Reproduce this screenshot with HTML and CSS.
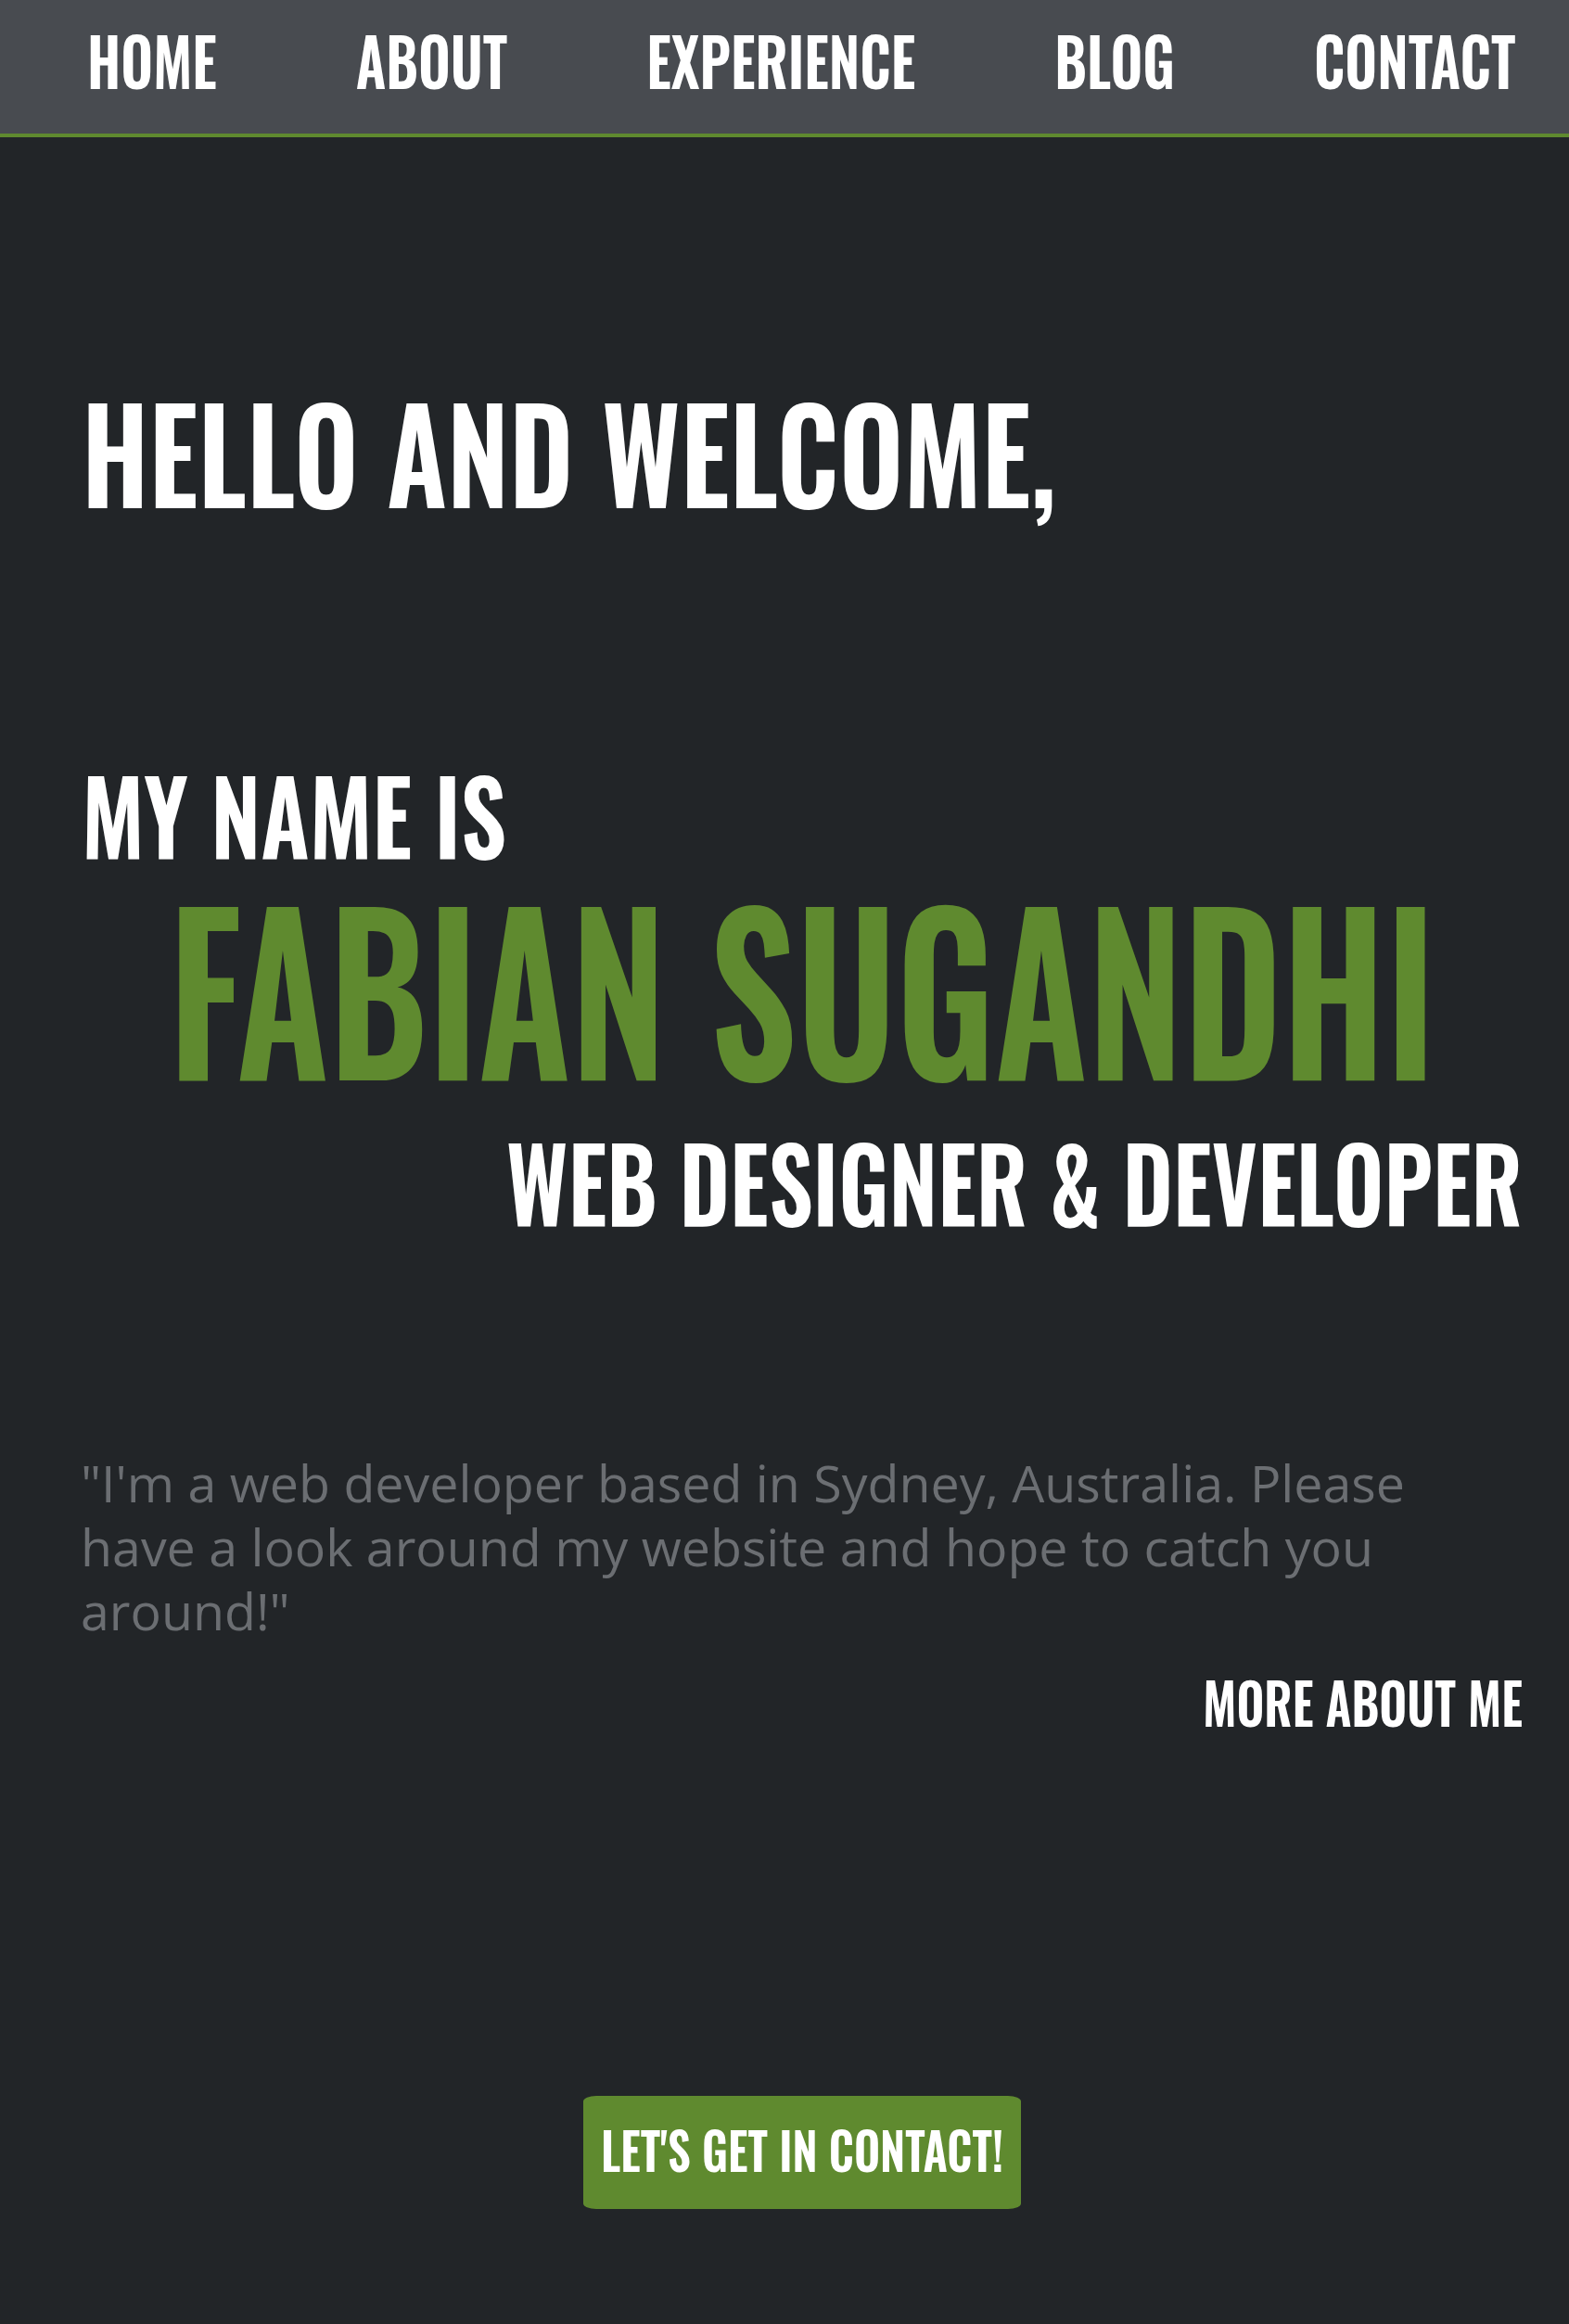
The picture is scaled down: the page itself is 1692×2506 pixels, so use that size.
FILE: index.html
```html
<!DOCTYPE html>
<html lang="en">
<head>
<meta charset="utf-8">
<title>Fabian Sugandhi</title>
<link rel="stylesheet" href="styles.css">
</head>
<body>
<nav class="nav">
  <a class="nav-link" href="#">HOME</a>
  <a class="nav-link" href="#">ABOUT</a>
  <a class="nav-link" href="#">EXPERIENCE</a>
  <a class="nav-link" href="#">BLOG</a>
  <a class="nav-link" href="#">CONTACT</a>
</nav>
<main class="hero">
  <h1 class="hello tall">HELLO AND WELCOME,</h1>
  <h2 class="name-intro tall">MY NAME IS</h2>
  <h2 class="name tall">FABIAN SUGANDHI</h2>
  <h3 class="role tall">WEB DESIGNER &amp; DEVELOPER</h3>
  <p class="intro">"I'm a web developer based in Sydney, Australia. Please have a look around my website and hope to catch you around!"</p>
  <div class="more-row"><a class="more tall" href="#">MORE ABOUT ME</a></div>
  <a class="cta" href="#"><span class="cta-text tall">LET'S GET IN CONTACT!</span></a>
</main>
</body>
</html>
```
FILE: styles.css
```css
* { box-sizing: border-box; }
html, body { margin: 0; }
body {
  background: #222528;
  color: #ffffff;
  font-family: "Oswald", "Liberation Sans Narrow", "Liberation Sans", sans-serif;
  min-height: 2506px;
}
.tall {
  transform: scaleY(var(--sy, 1.2));
  transform-origin: 50% calc(50% + 0.047em);
}
.nav {
  height: 148px;
  background: #484b50;
  border-bottom: 4px solid #5f8a2f;
  padding: 36px 0 0 94px;
  display: flex;
  align-items: flex-start;
  gap: 150px;
}
.nav-link {
  color: #ffffff;
  text-decoration: none;
  font-weight: 600;
  font-size: 60.5px;
  line-height: 58px;
  transform: scaleY(1.184);
  transform-origin: 50% calc(50% + 0.047em);
}
.hero {
  padding: 0 50px 0 88px;
}
.hero h1, .hero h2, .hero h3 {
  margin: 0;
  font-weight: 600;
}
.hello {
  font-size: 121px;
  line-height: 113px;
  --sy: 1.153;
  margin-top: 282px !important;
}
.name-intro {
  font-size: 97.5px;
  line-height: 90px;
  --sy: 1.14;
  margin-top: 289px !important;
}
.name {
  font-size: 186px;
  line-height: 187px;
  --sy: 1.241;
  color: #5f8a2f;
  text-align: center;
  margin-top: 48px !important;
}
.role {
  font-size: 95px;
  line-height: 90px;
  --sy: 1.17;
  text-align: right;
  margin-top: 71px !important;
}
.intro {
  margin: 246px 0 0 -1px;
  font-family: "Open Sans", "Noto Sans", sans-serif;
  font-weight: 400;
  font-size: 55.5px;
  line-height: 69px;
  color: #6b6e72;
}
.more-row {
  margin-top: 40px;
  text-align: right;
  font-size: 52px;
  line-height: 49px;
}
.more {
  display: inline-block;
  color: #ffffff;
  text-decoration: none;
  font-weight: 600;
  font-size: 52px;
  line-height: 49px;
  --sy: 1.163;
}
.cta {
  display: flex;
  align-items: center;
  justify-content: center;
  width: 472px;
  height: 122px;
  margin: 400px auto 0;
  padding-bottom: 7px;
  background: #5f8a2f;
  border-radius: 14px / 6px;
  color: #ffffff;
  text-decoration: none;
}
.cta-text {
  display: inline-block;
  font-weight: 600;
  font-size: 49px;
  line-height: 45px;
  --sy: 1.134;
}
```
